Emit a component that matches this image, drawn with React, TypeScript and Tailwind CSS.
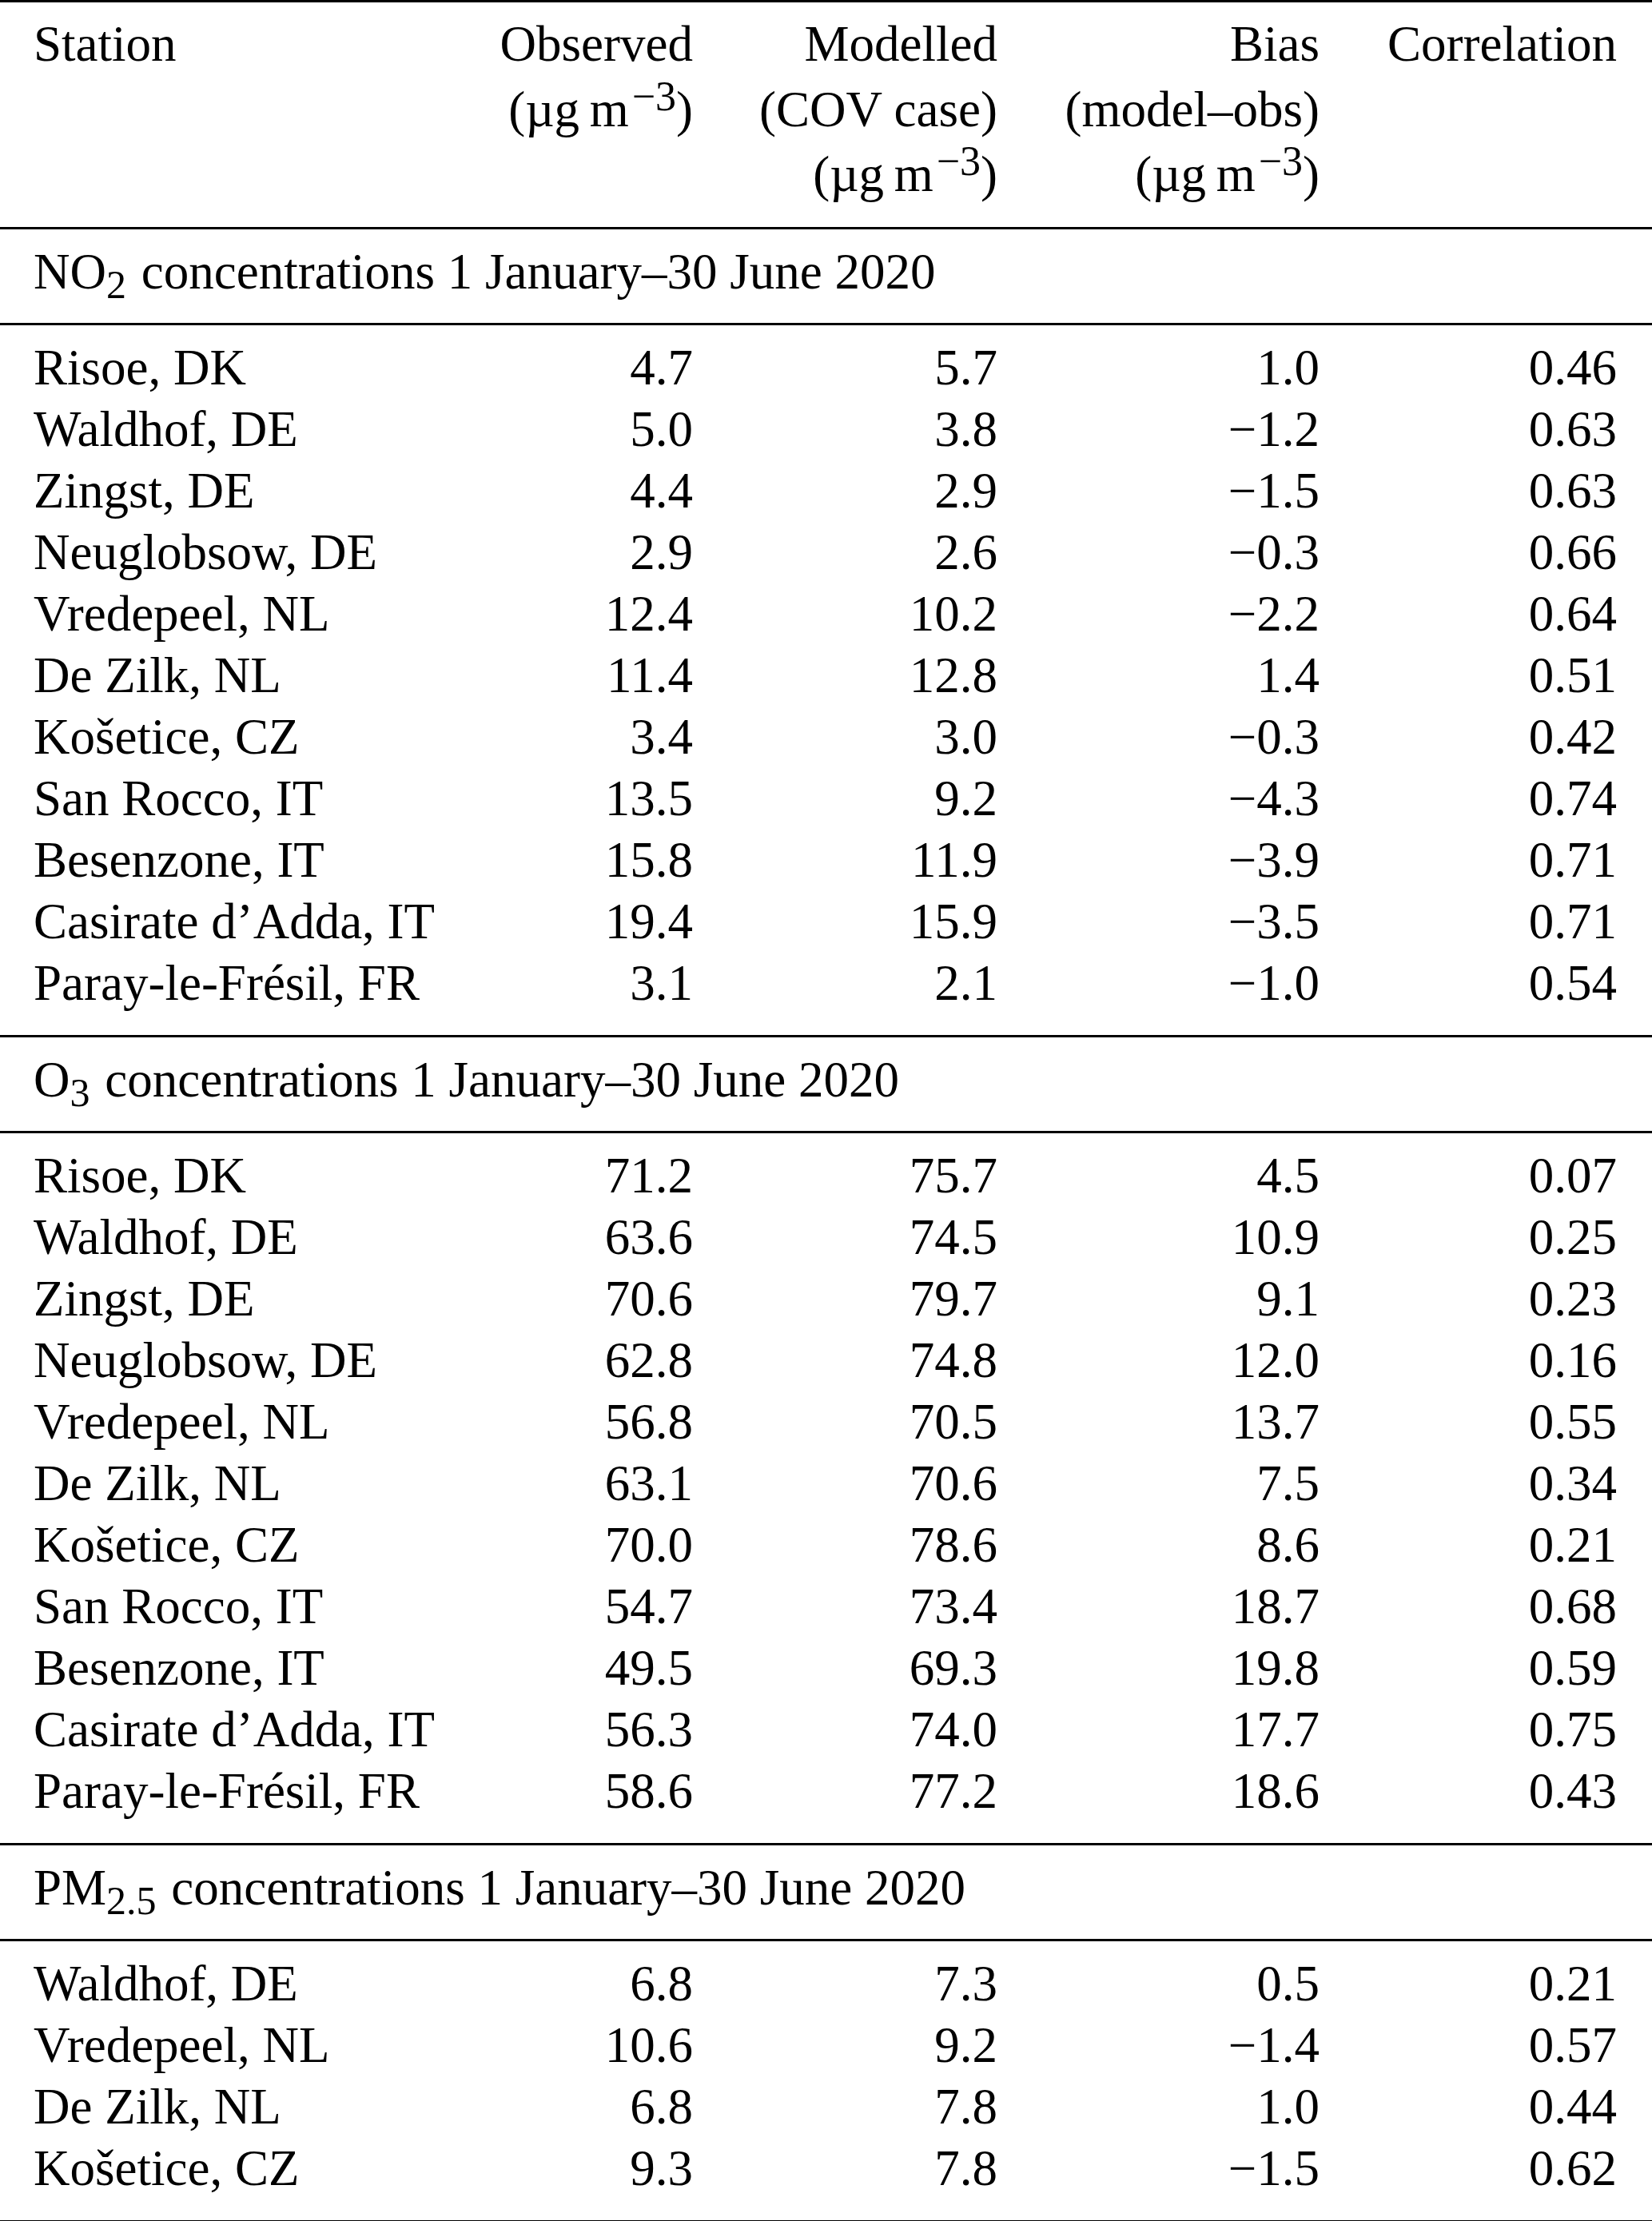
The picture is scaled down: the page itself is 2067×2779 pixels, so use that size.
import React from "react";

type Row = [string, string, string, string, string];

const no2Rows: Row[] = [
  ["Risoe, DK", "4.7", "5.7", "1.0", "0.46"],
  ["Waldhof, DE", "5.0", "3.8", "−1.2", "0.63"],
  ["Zingst, DE", "4.4", "2.9", "−1.5", "0.63"],
  ["Neuglobsow, DE", "2.9", "2.6", "−0.3", "0.66"],
  ["Vredepeel, NL", "12.4", "10.2", "−2.2", "0.64"],
  ["De Zilk, NL", "11.4", "12.8", "1.4", "0.51"],
  ["Košetice, CZ", "3.4", "3.0", "−0.3", "0.42"],
  ["San Rocco, IT", "13.5", "9.2", "−4.3", "0.74"],
  ["Besenzone, IT", "15.8", "11.9", "−3.9", "0.71"],
  ["Casirate d’Adda, IT", "19.4", "15.9", "−3.5", "0.71"],
  ["Paray-le-Frésil, FR", "3.1", "2.1", "−1.0", "0.54"],
];

const o3Rows: Row[] = [
  ["Risoe, DK", "71.2", "75.7", "4.5", "0.07"],
  ["Waldhof, DE", "63.6", "74.5", "10.9", "0.25"],
  ["Zingst, DE", "70.6", "79.7", "9.1", "0.23"],
  ["Neuglobsow, DE", "62.8", "74.8", "12.0", "0.16"],
  ["Vredepeel, NL", "56.8", "70.5", "13.7", "0.55"],
  ["De Zilk, NL", "63.1", "70.6", "7.5", "0.34"],
  ["Košetice, CZ", "70.0", "78.6", "8.6", "0.21"],
  ["San Rocco, IT", "54.7", "73.4", "18.7", "0.68"],
  ["Besenzone, IT", "49.5", "69.3", "19.8", "0.59"],
  ["Casirate d’Adda, IT", "56.3", "74.0", "17.7", "0.75"],
  ["Paray-le-Frésil, FR", "58.6", "77.2", "18.6", "0.43"],
];

const pmRows: Row[] = [
  ["Waldhof, DE", "6.8", "7.3", "0.5", "0.21"],
  ["Vredepeel, NL", "10.6", "9.2", "−1.4", "0.57"],
  ["De Zilk, NL", "6.8", "7.8", "1.0", "0.44"],
  ["Košetice, CZ", "9.3", "7.8", "−1.5", "0.62"],
];

const cols = "grid grid-cols-[525px_300px_381px_403px_372px] pl-[42px] pr-[44px]";

function Unit() {
  return (
    <span>
      (µg{"\u2009"}m<sup className="text-[52px] -top-5 ml-[4px]">−3</sup>)
    </span>
  );
}

function Heading({ children }: { children: React.ReactNode }) {
  return (
    <div className="border-t-[3px] border-black pl-[42px] pr-[44px] pt-[15px] pb-[25px] leading-[77px] whitespace-nowrap">
      {children} concentrations 1 January–30 June 2020
    </div>
  );
}

function Rows({ rows }: { rows: Row[] }) {
  return (
    <div className={`${cols} border-t-[3px] border-black pt-[15px] pb-[26px] leading-[77px]`}>
      {rows.map((r, i) => (
        <React.Fragment key={i}>
          <div className="whitespace-nowrap">{r[0]}</div>
          <div className="text-right">{r[1]}</div>
          <div className="text-right">{r[2]}</div>
          <div className="text-right">{r[3]}</div>
          <div className="text-right">{r[4]}</div>
        </React.Fragment>
      ))}
    </div>
  );
}

export default function App() {
  return (
    <div className="w-[2067px] bg-white text-black font-['Liberation_Serif','Times_New_Roman',serif] text-[63px]">
      <div className="border-t-[3px] border-b-[3px] border-black">
        {/* column heads */}
        <div className={`${cols} pt-[12px] pb-[24px] leading-[81.5px]`}>
          <div>Station</div>
          <div className="text-right">
            <div>Observed</div>
            <div><Unit /></div>
          </div>
          <div className="text-right">
            <div>Modelled</div>
            <div>(COV case)</div>
            <div><Unit /></div>
          </div>
          <div className="text-right">
            <div>Bias</div>
            <div>(model–obs)</div>
            <div><Unit /></div>
          </div>
          <div className="text-right">
            <div>Correlation</div>
          </div>
        </div>

        <Heading>
          NO<sub className="text-[50px] mr-[3px]">2</sub>
        </Heading>
        <Rows rows={no2Rows} />
        <Heading>
          O<sub className="text-[50px] mr-[3px]">3</sub>
        </Heading>
        <Rows rows={o3Rows} />
        <Heading>
          PM<sub className="text-[50px] mr-[3px]">2.5</sub>
        </Heading>
        <Rows rows={pmRows} />
      </div>
    </div>
  );
}
